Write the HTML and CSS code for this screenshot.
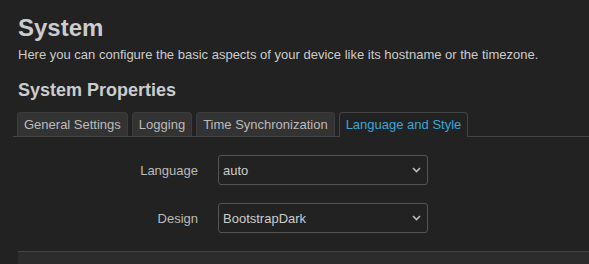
FILE: index.html
```html
<!DOCTYPE html>
<html lang="en">
<head>
    <meta charset="UTF-8">
    <meta name="viewport" content="width=device-width, initial-scale=1.0">
    <title>System</title>
    <link rel="stylesheet" href="styles.css">
</head>
<body>
    <div class="main">
        <h2>System</h2>
        <p class="desc">Here you can configure the basic aspects of your device like its hostname or the timezone.</p>
        <h3>System Properties</h3>

        <!-- Tabs -->
        <ul class="tabs">
            <li class="tab">General Settings</li>
            <li class="tab">Logging</li>
            <li class="tab">Time Synchronization</li>
            <li class="tab active">Language and Style</li>
        </ul>

        <div class="section">
            <div class="row">
                <label for="lang">Language</label>
                <div class="select">
                    <span>auto</span>
                    <svg width="9" height="6" viewBox="0 0 9 6"><path d="M1 1l3.5 3.5L8 1" fill="none" stroke="#bbb" stroke-width="1.6"/></svg>
                </div>
            </div>
            <div class="row">
                <label for="design">Design</label>
                <div class="select">
                    <span>BootstrapDark</span>
                    <svg width="9" height="6" viewBox="0 0 9 6"><path d="M1 1l3.5 3.5L8 1" fill="none" stroke="#bbb" stroke-width="1.6"/></svg>
                </div>
            </div>
        </div>

        <div class="footer"></div>
    </div>
</body>
</html>
```

FILE: styles.css
```css
/* Page */
body {
    margin: 0;
    background: #222;
    color: #ccc;
    font-family: "Liberation Sans", Arial, sans-serif;
    font-size: 13px;
    height: 264px;
    overflow: hidden;
}

.main {
    padding: 12px 0 0 18px;
}

/* Headings */
h2 {
    margin: 0;
    font-size: 24px;
    line-height: 32px;
    font-weight: bold;
    color: #ccc;
}

.desc {
    margin: 2px 0 0;
    line-height: 18px;
}

h3 {
    margin: 14px 0 0;
    font-size: 18px;
    line-height: 24px;
    font-weight: bold;
    color: #ccc;
}

/* Tabs */
.tabs {
    list-style: none;
    margin: 10px 0 0 -5px;
    padding: 0 0 0 4px;
    display: flex;
    gap: 4px;
    border-bottom: 1px solid #444;
}

.tab {
    background: #333;
    border: 1px solid #3c3c3c;
    border-bottom: none;
    border-radius: 4px 4px 0 0;
    padding: 0 6px;
    line-height: 23px;
    color: #bbb;
}

.active {
    background: #222;
    border-color: #444;
    color: #3fa4d3;
    margin-bottom: -1px;
    padding-bottom: 1px;
}

/* Form */
.section {
    padding-top: 18px;
}

.row {
    display: flex;
    align-items: center;
    margin-bottom: 18px;
}

.row label {
    width: 180px;
    text-align: right;
    color: #bbb;
}

.select {
    margin-left: 20px;
    width: 198px;
    height: 28px;
    border: 1px solid #555;
    border-radius: 3px;
    background: #222;
    display: flex;
    align-items: center;
    justify-content: space-between;
    padding: 0 6px 0 4px;
    color: #ccc;
}

/* Bottom panel */
.footer {
    border-top: 1px solid #444;
    background: #2c2c2c;
    height: 12px;
}
```
